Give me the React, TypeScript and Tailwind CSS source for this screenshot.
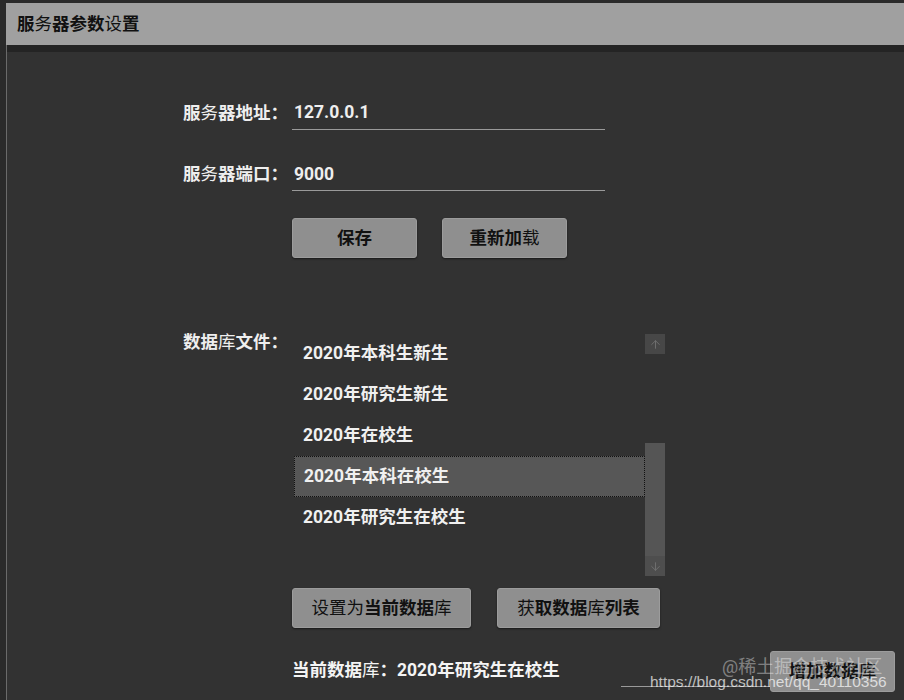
import React from "react";
import { ArrowUp, ArrowDown } from "lucide-react";

const F = { fontFamily: "Roboto, 'Noto Sans CJK SC', sans-serif" };

const B = ({ children }: { children: React.ReactNode }) => <span className="font-bold">{children}</span>;
const N = ({ children }: { children: React.ReactNode }) => <span className="font-normal">{children}</span>;

function Btn({ w, children }: { w: string; children: React.ReactNode }) {
  return (
    <div
      className={`${w} h-[40px] flex items-center justify-center bg-[#8f8f8f] border border-[#9c9c9c] rounded-[3px] text-[17.5px] text-[#111] shadow-[0_1px_2px_rgba(0,0,0,0.5)]`}
    >
      {children}
    </div>
  );
}

const items = ["2020年本科生新生", "2020年研究生新生", "2020年在校生", "2020年本科在校生", "2020年研究生在校生"];

export default function App() {
  return (
    <div className="w-[904px] h-[700px] bg-[#2a2a2a] relative overflow-hidden" style={F}>
      <div className="h-[3px]" />
      <div className="ml-[6px] h-[42px] bg-[#a0a0a0] flex items-center pl-[11px] text-[17.5px] text-[#111]">
        <B>服</B><N>务</N><B>器参数</B><N>设</N><B>置</B>
      </div>
      <div className="ml-[6px] h-[655px] border-l border-[#6a6a6a] bg-[#323232] flex flex-col">
        <div className="h-[7px] bg-[#242424]" />
        <div className="pl-[176px] pt-[44px] flex flex-col">
          <div className="flex items-center h-[34px]">
            <div className="w-[109px] text-[17.5px] text-[#eee]">
              <B>服</B><N>务</N><B>器地址：</B>
            </div>
            <div className="w-[313px] h-[34px] border-b border-[#9a9a9a] flex items-center pl-[2px] text-[17.5px] font-bold text-[#eee]">
              127.0.0.1
            </div>
          </div>
          <div className="flex items-center h-[33px] mt-[28px]">
            <div className="w-[109px] text-[17.5px] text-[#eee]">
              <B>服</B><N>务</N><B>器端口：</B>
            </div>
            <div className="w-[313px] h-[33px] border-b border-[#9a9a9a] flex items-center pl-[2px] text-[17.5px] font-bold text-[#eee]">
              9000
            </div>
          </div>
          <div className="flex ml-[109px] mt-[27px] gap-[25px]">
            <Btn w="w-[125px]"><B>保存</B></Btn>
            <Btn w="w-[125px]"><B>重新加</B><N>载</N></Btn>
          </div>
          <div className="flex mt-[75px]">
            <div className="w-[111px] text-[17.5px] text-[#eee] leading-[20px] mt-[-1px]">
              <B>数据</B><N>库</N><B>文件：</B>
            </div>
            <div className="w-[371px] h-[243px] flex">
              <div className="w-[351px] flex flex-col">
                {items.map((t, i) => (
                  <div
                    key={t}
                    className={`h-[41px] flex items-center pl-[9px] text-[17.5px] font-bold text-[#f0f0f0] ${
                      i === 3 ? "bg-[#575757] border border-dotted border-[#111]" : ""
                    }`}
                  >
                    {t}
                  </div>
                ))}
              </div>
              <div className="w-[20px] flex flex-col">
                <div className="h-[20px] mt-[1px] bg-[#474747] flex items-center justify-center text-[#707070]">
                  <ArrowUp size={13} strokeWidth={1.75} />
                </div>
                <div className="flex-1" />
                <div className="h-[133px] bg-[#555] flex flex-col justify-end">
                  <div className="h-[20px] bg-[#4e4e4e] flex items-center justify-center text-[#707070]">
                    <ArrowDown size={13} strokeWidth={1.75} />
                  </div>
                </div>
              </div>
            </div>
          </div>
          <div className="flex ml-[109px] mt-[12px] gap-[26px]">
            <Btn w="w-[179px]"><N>设置为</N><B>当前数据</B><N>库</N></Btn>
            <Btn w="w-[163px]"><N>获</N><B>取数据</B><N>库</N><B>列表</B></Btn>
          </div>
          <div className="flex ml-[109px] mt-[23px] items-start">
            <div className="w-[329px] mt-[7px] text-[17.5px] text-[#f4f4f4] leading-[24px]">
              <B>当前数据</B><N>库</N><B>：2020年研究生在校生</B>
            </div>
            <div className="w-[149px] h-[36px] border-b border-[#9a9a9a]" />
            <div className="w-[125px] h-[41px] flex items-center justify-center bg-[#8f8f8f] border border-[#9c9c9c] rounded-[3px] text-[17.5px] text-[#111]">
              <B>增加数据</B><N>库</N>
            </div>
          </div>
        </div>
      </div>
      <div className="absolute left-[722px] top-[654px] text-[18px] text-white/40 leading-[26px]">@稀土掘金技术社区</div>
      <div
        className="absolute left-[650px] top-[672px] text-[15.5px] text-white/70 leading-[20px]"
        style={{ fontFamily: "'Liberation Sans', sans-serif" }}
      >
        https://blog.csdn.net/qq_40110356
      </div>
    </div>
  );
}
